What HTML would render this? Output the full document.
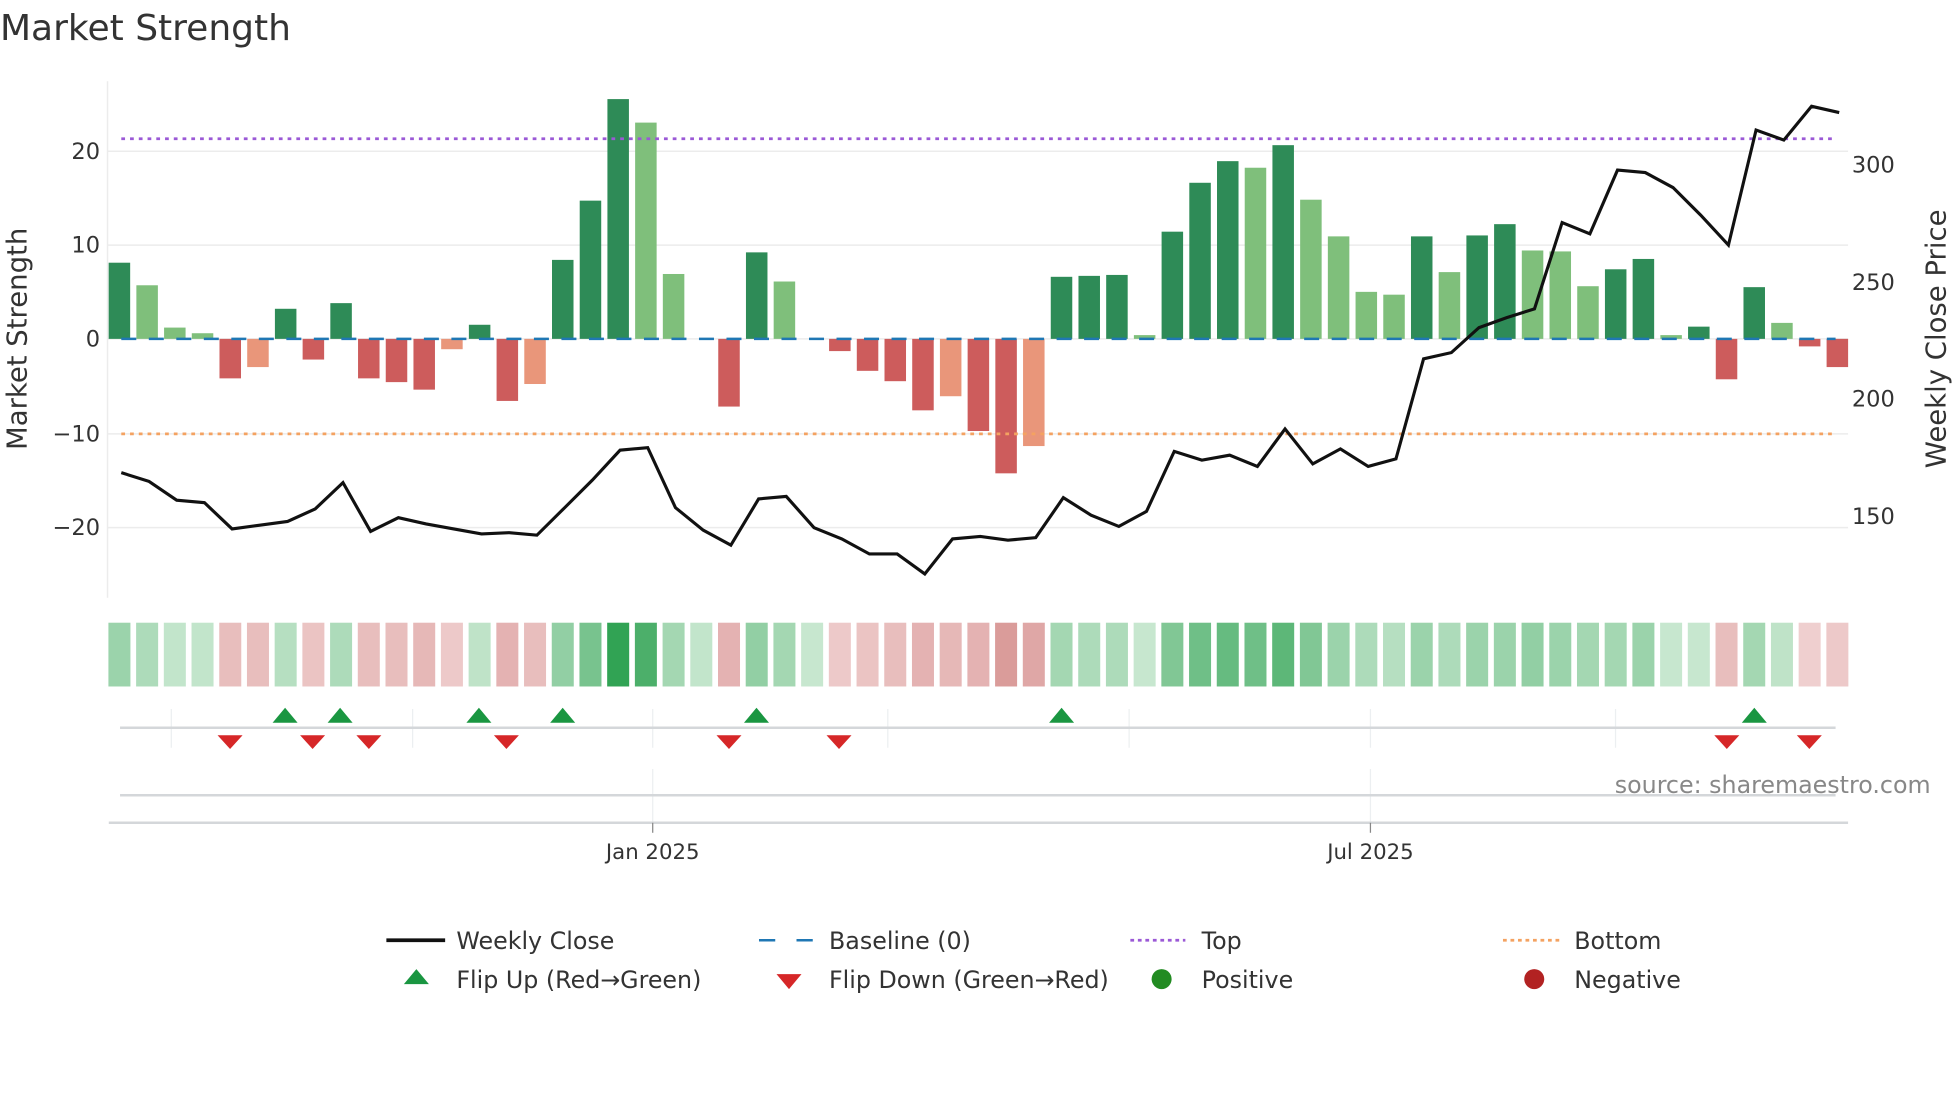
<!DOCTYPE html>
<html><head><meta charset="utf-8"><style>
html,body{margin:0;padding:0;background:#fff;}
svg{display:block;font-family:"DejaVu Sans","Liberation Sans",sans-serif;}
</style></head><body>
<svg id="s" width="1960" height="1102" viewBox="0 0 1567.5 881.3" xmlns="http://www.w3.org/2000/svg">
<rect width="1567.5" height="881.3" fill="#fff"/>
<text x="0" y="32" font-size="28.8" fill="#333">Market Strength</text>
<g id="grid" stroke="#ececec" stroke-width="1.2">
<line x1="86" y1="121" x2="1478" y2="121"/><line x1="86" y1="196" x2="1478" y2="196"/>
<line x1="86" y1="271" x2="1478" y2="271"/><line x1="86" y1="347" x2="1478" y2="347"/>
<line x1="86" y1="422" x2="1478" y2="422"/>
<line x1="86" y1="65" x2="86" y2="478"/>
</g>
<g font-size="18" fill="#333" text-anchor="end">
<text x="80" y="127">20</text><text x="80" y="202">10</text><text x="80" y="277">0</text>
<text x="80" y="353">−10</text><text x="80" y="428">−20</text>
</g>
<g font-size="18" fill="#333">
<text x="1481" y="138">300</text><text x="1481" y="232">250</text><text x="1481" y="325">200</text><text x="1481" y="419">150</text>
</g>
<text transform="translate(21,271) rotate(-90)" font-size="22" fill="#333" text-anchor="middle">Market Strength</text>
<text transform="translate(1556,271) rotate(-90)" font-size="22" fill="#333" text-anchor="middle">Weekly Close Price</text>
<g id="bars"></g>
<line x1="97" y1="271" x2="1468" y2="271" stroke="#1f77b4" stroke-width="2" stroke-dasharray="12,10"/>
<line x1="97" y1="111" x2="1468" y2="111" stroke="#9b59d6" stroke-width="2.2" stroke-dasharray="3,4"/>
<line x1="97" y1="347" x2="1468" y2="347" stroke="#f4a261" stroke-width="2.2" stroke-dasharray="3,4"/>
<polyline id="price" fill="none" stroke="#111" stroke-width="2.5" stroke-linejoin="miter"/>
<g id="heat"></g>
<g stroke="#eceff1" stroke-width="1">
<line x1="137" y1="567" x2="137" y2="598"/><line x1="330" y1="567" x2="330" y2="598"/>
<line x1="522" y1="567" x2="522" y2="598"/><line x1="710" y1="567" x2="710" y2="598"/>
<line x1="903" y1="567" x2="903" y2="598"/><line x1="1096" y1="567" x2="1096" y2="598"/>
<line x1="1292" y1="567" x2="1292" y2="598"/>
<line x1="522" y1="615" x2="522" y2="658"/><line x1="1096" y1="615" x2="1096" y2="658"/>
</g>
<line x1="96" y1="582" x2="1468" y2="582" stroke="#d4d7da" stroke-width="2"/>
<g id="flips"></g>
<line x1="96" y1="636" x2="1468" y2="636" stroke="#d4d7da" stroke-width="2"/>
<line x1="87" y1="658" x2="1478" y2="658" stroke="#d4d7da" stroke-width="2"/>
<line x1="522" y1="658" x2="522" y2="666" stroke="#888" stroke-width="1"/>
<line x1="1096" y1="658" x2="1096" y2="666" stroke="#888" stroke-width="1"/>
<g font-size="17" fill="#333" text-anchor="middle">
<text x="522" y="687">Jan 2025</text><text x="1096" y="687">Jul 2025</text>
</g>
<text x="1544" y="634" font-size="19" fill="#888" text-anchor="end">source: sharemaestro.com</text>
<g font-size="19" fill="#333">
<line x1="309" y1="752" x2="356" y2="752" stroke="#111" stroke-width="3"/>
<text x="365" y="759">Weekly Close</text>
<line x1="607" y1="752" x2="650" y2="752" stroke="#1f77b4" stroke-width="2" stroke-dasharray="13,17"/>
<text x="663" y="759">Baseline (0)</text>
<line x1="904" y1="752" x2="948" y2="752" stroke="#9b59d6" stroke-width="2.2" stroke-dasharray="3,3"/>
<text x="961" y="759">Top</text>
<line x1="1202" y1="752" x2="1247" y2="752" stroke="#f4a261" stroke-width="2.2" stroke-dasharray="3,3"/>
<text x="1259" y="759">Bottom</text>
<polygon points="333,775 323,787 343,787" fill="#1a9641"/>
<text x="365" y="790">Flip Up (Red→Green)</text>
<polygon points="621,779 641,779 631,791" fill="#d62728"/>
<text x="663" y="790">Flip Down (Green→Red)</text>
<circle cx="929" cy="783" r="8" fill="#228b22"/>
<text x="961" y="790">Positive</text>
<circle cx="1227" cy="783" r="8" fill="#b22222"/>
<text x="1259" y="790">Negative</text>
</g>
</svg>
<script>
var NS="http://www.w3.org/2000/svg";
function el(t,a,p){var e=document.createElementNS(NS,t);for(var k in a)e.setAttribute(k,a[k]);document.getElementById(p).appendChild(e);return e;}
var D="#2e8b57",L="#7fbf7b",R="#cd5c5c",S="#e9967a";
var bars=[[8.1,D],[5.7,L],[1.2,L],[0.6,L],[-4.2,R],[-3,S],[3.2,D],[-2.2,R],[3.8,D],[-4.2,R],[-4.6,R],[-5.4,R],[-1.1,S],[1.5,D],[-6.6,R],[-4.8,S],[8.4,D],[14.7,D],[25.5,D],[23,L],[6.9,L],[0,L],[-7.2,R],[9.2,D],[6.1,L],[0,L],[-1.3,R],[-3.4,R],[-4.5,R],[-7.6,R],[-6.1,S],[-9.8,R],[-14.3,R],[-11.4,S],[6.6,D],[6.7,D],[6.8,D],[0.4,L],[11.4,D],[16.6,D],[18.9,D],[18.2,L],[20.6,D],[14.8,L],[10.9,L],[5,L],[4.7,L],[10.9,D],[7.1,L],[11,D],[12.2,D],[9.4,L],[9.3,L],[5.6,L],[7.4,D],[8.5,D],[0.4,L],[1.3,D],[-4.3,R],[5.5,D],[1.7,L],[-0.8,R],[-3,R]];
var price=[378,385,400,402,423,420,417,407,386,425,414,419,423,427,426,428,406,384,360,358,406,424,436,399,397,422,431,443,443,459,431,429,432,430,398,412,421,409,361,368,364,373,343,371,359,373,367,287,282,262,254,247,178,187,136,138,150,172,196,104,112,85,90];
var heat=[.4,.3,.18,.18,-.3,-.3,.25,-.25,.3,-.3,-.3,-.35,-.2,.2,-.4,-.3,.45,.6,1,.85,.35,.18,-.4,.45,.35,.15,-.2,-.25,-.3,-.4,-.35,-.4,-.6,-.5,.35,.3,.3,.15,.55,.65,.7,.65,.75,.55,.4,.3,.25,.4,.3,.4,.4,.45,.4,.35,.35,.4,.15,.15,-.3,.35,.2,-.15,-.2];
function X(i){return 95.5+i*22.16;}
function mix(a,b,t){return "rgb("+a.map(function(v,k){return Math.round(v+(b[k]-v)*t)}).join(",")+")";}
var pts=[];
for(var i=0;i<63;i++){
 var v=bars[i][0],y0=271,y1=271-7.52*v;
 if(Math.abs(v)>0.05)el("rect",{x:X(i)-8.6,y:Math.min(y0,y1),width:17.2,height:Math.abs(y1-y0),fill:bars[i][1]},"bars");
 pts.push((X(i)+1.5).toFixed(1)+","+price[i]);
 var h=heat[i],c=h>=0?mix([226,243,229],[49,163,84],h):mix([246,224,224],[200,110,108],-h);
 el("rect",{x:X(i)-8.8,y:498,width:17.6,height:51,fill:c},"heat");
}
document.getElementById("price").setAttribute("points",pts.join(" "));
[228,272,383,450,605,849,1403].forEach(function(x){el("polygon",{points:x+",566 "+(x-10)+",578 "+(x+10)+",578",fill:"#1a9641"},"flips");});
[184,250,295,405,583,671,1381,1447].forEach(function(x){el("polygon",{points:(x-10)+",588 "+(x+10)+",588 "+x+",599",fill:"#d62728"},"flips");});
</script>
</body></html>
